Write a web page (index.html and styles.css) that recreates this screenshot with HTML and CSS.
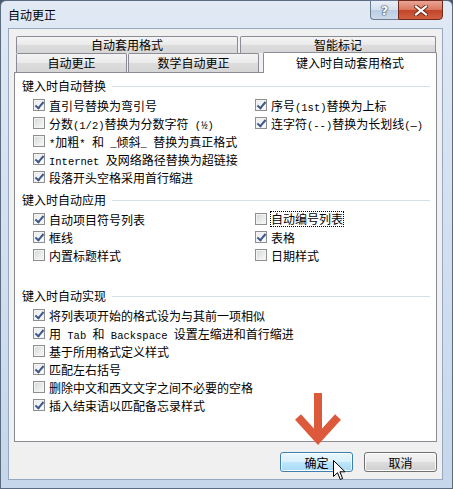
FILE: index.html
```html
<!DOCTYPE html>
<html lang="zh-CN">
  <head>
    <meta charset="UTF-8" />
    <title>自动更正</title>
    <link rel="stylesheet" href="styles.css">
  </head>
  <body>
    <div class="window">
      <div class="titlebar">
        <span class="title">自动更正</span>
        <div class="caption">
          <span class="cap help">?</span>
          <span class="cap close">
            <svg width="14" height="11" viewBox="0 0 14 11">
              <path d="M2 1.5 L12 9.5 M12 1.5 L2 9.5" stroke="#6b2418" stroke-width="4" stroke-linecap="square"/>
              <path d="M2 1.5 L12 9.5 M12 1.5 L2 9.5" stroke="#fff" stroke-width="2.2" stroke-linecap="square"/>
            </svg>
          </span>
        </div>
      </div>

      <div class="client">
        <div class="tabs">
          <div class="tab-row back">
            <div class="tab t1">自动套用格式</div>
            <div class="tab t2">智能标记</div>
          </div>
          <div class="tab-row front">
            <div class="tab t3">自动更正</div>
            <div class="tab t4">数学自动更正</div>
            <div class="tab active">键入时自动套用格式</div>
          </div>
        </div>

        <div class="panel">
          <div class="group">
            <div class="group-title">键入时自动替换</div>
            <div class="cols">
              <div class="col left">
                <div class="row"><span class="box checked"></span><span>直引号替换为弯引号</span></div>
                <div class="row"><span class="box"></span><span>分数<span class="en">(1/2)</span>替换为分数字符<span class="en"> (½)</span></span></div>
                <div class="row"><span class="box"></span><span><span class="en">*</span>加粗<span class="en">* </span>和<span class="en"> _</span>倾斜<span class="en">_ </span>替换为真正格式</span></div>
                <div class="row"><span class="box checked"></span><span><span class="en">Internet </span>及网络路径替换为超链接</span></div>
                <div class="row"><span class="box checked"></span><span>段落开头空格采用首行缩进</span></div>
              </div>
              <div class="col">
                <div class="row"><span class="box checked"></span><span>序号<span class="en">(1st)</span>替换为上标</span></div>
                <div class="row"><span class="box checked"></span><span>连字符<span class="en">(--)</span>替换为长划线<span class="en">(—)</span></span></div>
              </div>
            </div>
          </div>

          <div class="group g2">
            <div class="group-title">键入时自动应用</div>
            <div class="cols">
              <div class="col left">
                <div class="row"><span class="box checked"></span><span>自动项目符号列表</span></div>
                <div class="row"><span class="box checked"></span><span>框线</span></div>
                <div class="row"><span class="box"></span><span>内置标题样式</span></div>
              </div>
              <div class="col">
                <div class="row"><span class="box"></span><span class="focus">自动编号列表</span></div>
                <div class="row"><span class="box checked"></span><span>表格</span></div>
                <div class="row"><span class="box"></span><span>日期样式</span></div>
              </div>
            </div>
          </div>

          <div class="group g3">
            <div class="group-title">键入时自动实现</div>
            <div class="cols">
              <div class="col">
                <div class="row"><span class="box checked"></span><span>将列表项开始的格式设为与其前一项相似</span></div>
                <div class="row"><span class="box checked"></span><span>用<span class="en"> Tab </span>和<span class="en"> Backspace </span>设置左缩进和首行缩进</span></div>
                <div class="row"><span class="box"></span><span>基于所用格式定义样式</span></div>
                <div class="row"><span class="box checked"></span><span>匹配左右括号</span></div>
                <div class="row"><span class="box"></span><span>删除中文和西文文字之间不必要的空格</span></div>
                <div class="row"><span class="box checked"></span><span>插入结束语以匹配备忘录样式</span></div>
              </div>
            </div>
          </div>
        </div>

        <div class="buttons">
          <button class="btn default">确定</button>
          <button class="btn">取消</button>
        </div>
      </div>

      <!-- annotation arrow and mouse pointer over the dialog -->
      <svg class="arrow" width="48" height="56" viewBox="0 0 48 56">
        <path d="M24 0 V46 M4 24 L24 46 L44 24" fill="none" stroke="#dc5a3b" stroke-width="8"/>
      </svg>
      <svg class="pointer" width="13" height="21" viewBox="0 0 13 21">
        <path d="M0.5 0.5 L0.5 16.5 L4.5 12.7 L7.3 19.5 L9.6 18.5 L6.9 11.8 L12 11.8 Z" fill="#fff" stroke="#000" stroke-width="1"/>
      </svg>
    </div>
  </body>
</html>
```

FILE: styles.css
```css
* {
  box-sizing: border-box;
}

body {
  margin: 0;
  width: 453px;
  height: 489px;
  overflow: hidden;
  font-family: "Noto Sans CJK SC", "Noto Sans CJK JP", sans-serif;
  font-size: 12px;
  color: #000;
  background: #4a5a6e;
}

.window {
  position: relative;
  width: 453px;
  height: 489px;
  display: flex;
  flex-direction: column;
  padding: 0 9px 8px 7px;
  border: 1px solid #5b6b80;
  border-radius: 6px 6px 0 0;
  background: linear-gradient(180deg, #e0e9f4 0%, #d3e0f0 45%, #c6d7eb 100%);
}

.titlebar {
  height: 27px;
  display: flex;
  align-items: flex-start;
}

.title {
  margin-top: 5px;
  line-height: 18px;
}

.caption {
  margin-left: auto;
  margin-top: -1px;
  display: flex;
}

.cap {
  height: 20px;
  display: flex;
  align-items: center;
  justify-content: center;
  border: 1px solid #6a7b93;
}

.help {
  width: 28px;
  border-right: none;
  border-radius: 0 0 0 4px;
  background: linear-gradient(180deg, #e9eff7 0%, #d5e0ee 50%, #bccde3 51%, #cbd9ea 100%);
  color: #fff;
  font-family: "DejaVu Sans", sans-serif;
  font-weight: bold;
  font-size: 13px;
  text-shadow: 0 0 1px #34455e, 0 0 1px #34455e, 0 0 2px #34455e;
}

.close {
  width: 45px;
  border-color: #6e2a1e;
  border-radius: 0 0 4px 0;
  background: linear-gradient(180deg, #e9a595 0%, #d9785f 48%, #c2452b 52%, #d25f3f 100%);
}

.client {
  flex: 1;
  display: flex;
  flex-direction: column;
  background: #f0f0f0;
  border: 1px solid #97a9c0;
  padding: 7px 5px 7px 5px;
}

.tabs {
  margin-left: 2px;
}

.tab-row {
  display: flex;
}

.tab-row.back {
  height: 17px;
  gap: 2px;
}

.tab-row.front {
  height: 19px;
  gap: 1px;
  align-items: flex-end;
}

.tab {
  border: 1px solid #898c95;
  border-bottom: none;
  border-radius: 2px 2px 0 0;
  background: linear-gradient(180deg, #f4f4f4 0%, #eaeaea 50%, #dcdcdc 51%, #d6d6d6 100%);
  text-align: center;
  white-space: nowrap;
}

.back .tab {
  height: 17px;
  line-height: 16px;
}

.front .tab {
  height: 19px;
  line-height: 18px;
}

.t1 { width: 222px; }
.t2 { width: 196px; }
.t3 { width: 111px; }
.t4 { width: 131px; }

.front .tab.active {
  position: relative;
  z-index: 1;
  width: 174px;
  height: 21px;
  line-height: 19px;
  margin-left: 3px;
  margin-bottom: -1px;
  background: #fff;
}

.panel {
  height: 370px;
  background: #fff;
  border: 1px solid #898c95;
  padding: 4px 6px 0 7px;
}

.group-title {
  display: flex;
  align-items: center;
  line-height: 18px;
}

.group-title::after {
  content: "";
  flex: 1;
  margin-left: 6px;
  border-top: 1px solid #d5dfe5;
}

.g2 {
  margin-top: 5px;
}

.g3 {
  margin-top: 23px;
}

.cols {
  display: flex;
  margin-left: 11px;
  margin-top: 1px;
}

.col.left {
  width: 222px;
}

.row {
  display: flex;
  align-items: center;
  gap: 4px;
  height: 18px;
  white-space: nowrap;
}

.en {
  font-family: "Liberation Mono", monospace;
  font-size: 10.5px;
  white-space: pre;
}

.box {
  flex: none;
  position: relative;
  width: 12px;
  height: 12px;
  border: 1px solid #8e8f8f;
  background: linear-gradient(135deg, #d3d5d8 0%, #e9eaeb 55%, #fafafa 100%);
  box-shadow: inset 0 0 0 1px #f3f3f3;
}

.box.checked {
  background: linear-gradient(135deg, #e6e8ea 0%, #f6f6f6 60%, #ffffff 100%);
}

.box.checked::after {
  content: "";
  position: absolute;
  left: 3px;
  top: 0;
  width: 3px;
  height: 7px;
  border: solid #3e5a8a;
  border-width: 0 2px 2px 0;
  transform: rotate(40deg);
}

.focus {
  outline: 1px dotted #000;
  line-height: 14px;
}

.buttons {
  display: flex;
  justify-content: flex-end;
  gap: 11px;
  margin-top: 10px;
}

.btn {
  width: 73px;
  height: 20px;
  padding: 0;
  font-family: inherit;
  font-size: 12px;
  color: #000;
  border: 1px solid #707070;
  border-radius: 3px;
  background: linear-gradient(180deg, #f3f3f3 0%, #ebebeb 50%, #dddddd 51%, #cfcfcf 100%);
  box-shadow: inset 0 0 0 1px #fcfcfc;
}

.btn.default {
  border-color: #3c7fb1;
  background: linear-gradient(180deg, #eaf6fd 0%, #d9f0fc 50%, #bee6fd 51%, #a7d9f5 100%);
}

.arrow {
  position: absolute;
  left: 293px;
  top: 392px;
}

.pointer {
  position: absolute;
  left: 332px;
  top: 459px;
}
```
